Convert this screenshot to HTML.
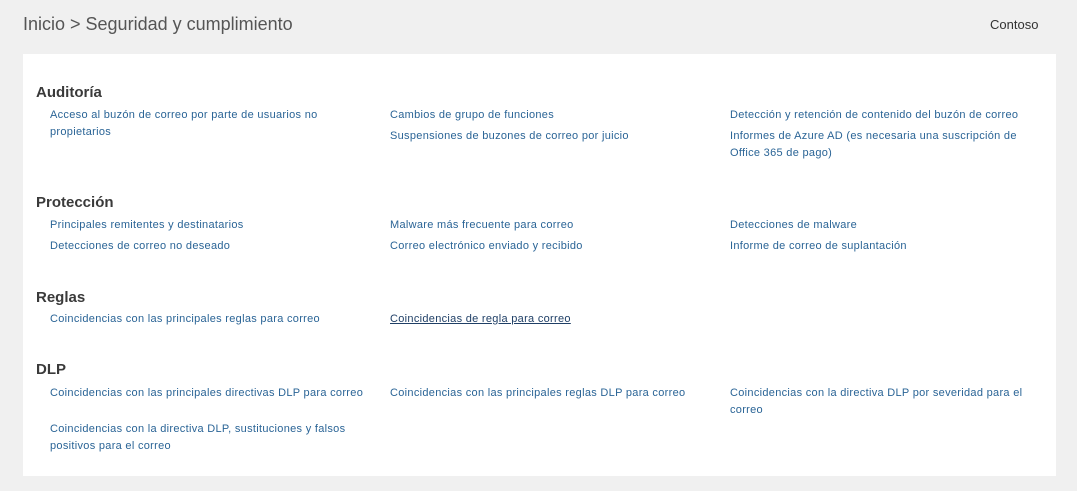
<!DOCTYPE html>
<html><head><meta charset="utf-8"><style>
body{margin:0;width:1077px;height:491px;background:#f0f0f0;font-family:"Liberation Sans",sans-serif;position:relative;overflow:hidden}
.t{position:absolute;left:23px;top:14px;font-size:18px;color:#555}
.c{position:absolute;left:990px;top:17px;font-size:13px;color:#333}
.p{position:absolute;left:23px;top:54px;width:1033px;height:422px;background:#fff}
h2{position:absolute;margin:0;left:36px;font-size:15px;font-weight:bold;color:#3a3a3a}
a{position:absolute;font-size:11px;color:#2a6496;text-decoration:none;letter-spacing:.3px;line-height:16.5px;width:330px}
a.u{color:#1f3f66;text-decoration:underline}
</style></head><body>
<div class="t">Inicio &gt; Seguridad y cumplimiento</div>
<div class="c">Contoso</div>
<div class="p"></div>
<h2 style="top:84px">Auditoría</h2>
<a style="left:50px;top:107px;width:285px">Acceso al buzón de correo por parte de usuarios no propietarios</a>
<a style="left:390px;top:107px">Cambios de grupo de funciones</a>
<a style="left:390px;top:128px">Suspensiones de buzones de correo por juicio</a>
<a style="left:730px;top:107px;width:310px">Detección y retención de contenido del buzón de correo</a>
<a style="left:730px;top:128px;width:295px">Informes de Azure AD (es necesaria una suscripción de Office 365 de pago)</a>
<h2 style="top:194px">Protección</h2>
<a style="left:50px;top:217px">Principales remitentes y destinatarios</a>
<a style="left:50px;top:238px">Detecciones de correo no deseado</a>
<a style="left:390px;top:217px">Malware más frecuente para correo</a>
<a style="left:390px;top:238px">Correo electrónico enviado y recibido</a>
<a style="left:730px;top:217px">Detecciones de malware</a>
<a style="left:730px;top:238px">Informe de correo de suplantación</a>
<h2 style="top:289px">Reglas</h2>
<a style="left:50px;top:311px">Coincidencias con las principales reglas para correo</a>
<a class="u" style="left:390px;top:311px;width:auto">Coincidencias de regla para correo</a>
<h2 style="top:361px">DLP</h2>
<a style="left:50px;top:385px;width:330px">Coincidencias con las principales directivas DLP para correo</a>
<a style="left:390px;top:385px;width:330px">Coincidencias con las principales reglas DLP para correo</a>
<a style="left:730px;top:385px;width:300px">Coincidencias con la directiva DLP por severidad para el correo</a>
<a style="left:50px;top:421px;width:300px">Coincidencias con la directiva DLP, sustituciones y falsos positivos para el correo</a>
</body></html>
